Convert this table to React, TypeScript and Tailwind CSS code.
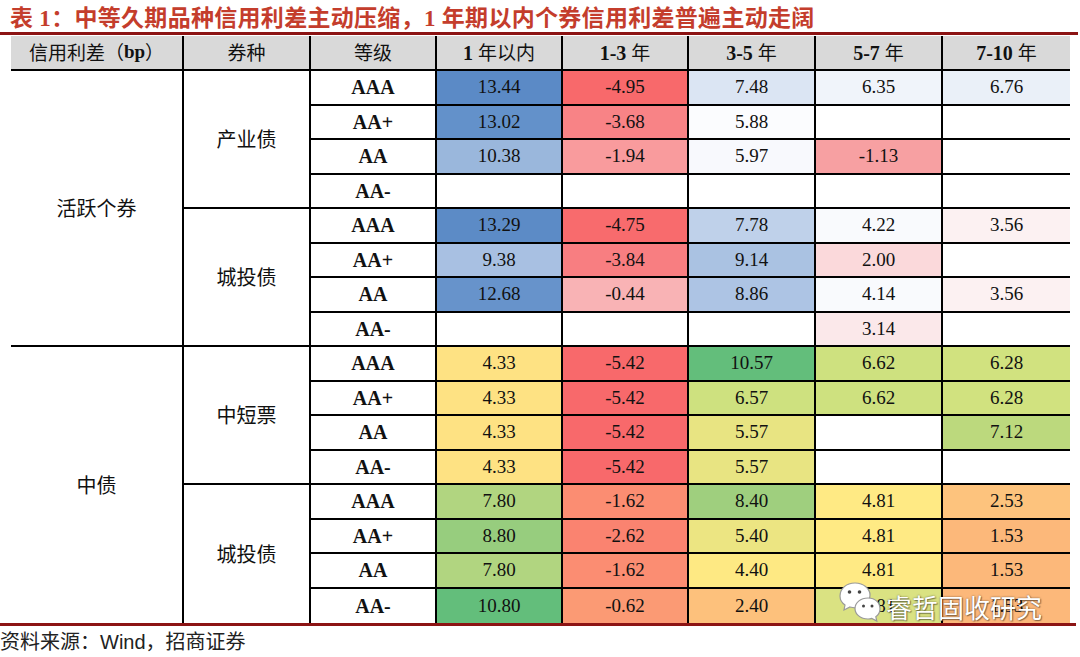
import React from "react";

// bg colours read off the Excel colour scales in the screenshot
type Cell = [string, string];

const W = "#ffffff";

const sections: {
  name: string;
  groups: { name: string; rows: { rating: string; cells: Cell[] }[] }[];
}[] = [
  {
    name: "活跃个券",
    groups: [
      {
        name: "产业债",
        rows: [
          { rating: "AAA", cells: [["13.44", "bg-[#5b8ac6]"], ["-4.95", "bg-[#f8696b]"], ["7.48", "bg-[#dbe5f3]"], ["6.35", "bg-[#f0f4fa]"], ["6.76", "bg-[#eaf0f8]"]] },
          { rating: "AA+", cells: [["13.02", "bg-[#6391ca]"], ["-3.68", "bg-[#f88386]"], ["5.88", "bg-[#fbfcfe]"], ["", W], ["", W]] },
          { rating: "AA", cells: [["10.38", "bg-[#9ab7dc]"], ["-1.94", "bg-[#f99b9d]"], ["5.97", "bg-[#f8f9fd]"], ["-1.13", "bg-[#f7a0a2]"], ["", W]] },
          { rating: "AA-", cells: [["", W], ["", W], ["", W], ["", W], ["", W]] },
        ],
      },
      {
        name: "城投债",
        rows: [
          { rating: "AAA", cells: [["13.29", "bg-[#5c8bc6]"], ["-4.75", "bg-[#f86b6d]"], ["7.78", "bg-[#bfd1ea]"], ["4.22", "bg-[#f9fafd]"], ["3.56", "bg-[#fcf1f2]"]] },
          { rating: "AA+", cells: [["9.38", "bg-[#a8c0e2]"], ["-3.84", "bg-[#f87e81]"], ["9.14", "bg-[#aac2e2]"], ["2.00", "bg-[#fbd9db]"], ["", W]] },
          { rating: "AA", cells: [["12.68", "bg-[#6793cb]"], ["-0.44", "bg-[#f9b3b5]"], ["8.86", "bg-[#adc4e4]"], ["4.14", "bg-[#f9fafd]"], ["3.56", "bg-[#fcf1f2]"]] },
          { rating: "AA-", cells: [["", W], ["", W], ["", W], ["3.14", "bg-[#fbe8ea]"], ["", W]] },
        ],
      },
    ],
  },
  {
    name: "中债",
    groups: [
      {
        name: "中短票",
        rows: [
          { rating: "AAA", cells: [["4.33", "bg-[#fee283]"], ["-5.42", "bg-[#f8696b]"], ["10.57", "bg-[#63be7b]"], ["6.62", "bg-[#cee17f]"], ["6.28", "bg-[#d1e27f]"]] },
          { rating: "AA+", cells: [["4.33", "bg-[#fee283]"], ["-5.42", "bg-[#f8696b]"], ["6.57", "bg-[#cee17f]"], ["6.62", "bg-[#cee17f]"], ["6.28", "bg-[#d1e27f]"]] },
          { rating: "AA", cells: [["4.33", "bg-[#fee283]"], ["-5.42", "bg-[#f8696b]"], ["5.57", "bg-[#e8e482]"], ["", W], ["7.12", "bg-[#bcd97d]"]] },
          { rating: "AA-", cells: [["4.33", "bg-[#fee283]"], ["-5.42", "bg-[#f8696b]"], ["5.57", "bg-[#e8e482]"], ["", W], ["", W]] },
        ],
      },
      {
        name: "城投债",
        rows: [
          { rating: "AAA", cells: [["7.80", "bg-[#b1d580]"], ["-1.62", "bg-[#fb8d72]"], ["8.40", "bg-[#9fcf7e]"], ["4.81", "bg-[#ffea84]"], ["2.53", "bg-[#fdc37d]"]] },
          { rating: "AA+", cells: [["8.80", "bg-[#97cd7e]"], ["-2.62", "bg-[#fa8370]"], ["5.40", "bg-[#ece582]"], ["4.81", "bg-[#ffea84]"], ["1.53", "bg-[#fcb87a]"]] },
          { rating: "AA", cells: [["7.80", "bg-[#b1d580]"], ["-1.62", "bg-[#fb8d72]"], ["4.40", "bg-[#fee983]"], ["4.81", "bg-[#ffea84]"], ["1.53", "bg-[#fcb87a]"]] },
          { rating: "AA-", cells: [["10.80", "bg-[#63be7b]"], ["-0.62", "bg-[#fb9a74]"], ["2.40", "bg-[#fdc17c]"], ["5.81", "bg-[#dae282]"], ["1.53", "bg-[#fcb87a]"]] },
        ],
      },
    ],
  },
];

const serif = "font-['Liberation_Serif','Noto_Sans_CJK_SC',serif]";
const cjk = "font-['Noto_Sans_CJK_SC',sans-serif]";

function WeChatMark() {
  return (
    <svg width="46" height="46" viewBox="0 0 46 46">
      <g stroke="#9a9a9a" strokeWidth="1.2" fill="#ffffff">
        <path d="M17 3C8 3 2 9 2 16c0 4 2 7 5 9l-1 5 6-3c2 .6 3.5.8 5 .8 9 0 15-6 15-12.8C32 9 26 3 17 3z" />
        <path d="M30 18c-7.5 0-13 4.8-13 10.5S22.5 39 30 39c1.4 0 2.6-.2 3.8-.6l5 2.6-1-4.3c2.6-1.9 4.2-4.7 4.2-7.7C42 22.8 37.5 18 30 18z" />
      </g>
      <circle cx="11.5" cy="12" r="1.8" fill="#444" />
      <circle cx="21.5" cy="12" r="1.8" fill="#444" />
      <circle cx="25.5" cy="26" r="1.5" fill="#444" />
      <circle cx="34" cy="26" r="1.5" fill="#444" />
    </svg>
  );
}

export default function App() {
  const headCell = "flex items-center justify-center bg-[#d9d9d9] border-b-2 border-black text-[19px] text-[#111]";
  return (
    <div className="relative w-[1080px] h-[657px] overflow-hidden bg-white">
      <div className={`h-[32px] pl-[10px] pt-[6px] text-[23px] leading-[26px] tracking-[0.3px] font-bold text-[#c43d2c] ${serif}`}>
        表 1：中等久期品种信用利差主动压缩，1 年期以内个券信用利差普遍主动走阔
      </div>
      <div className="h-[3px] w-[1078px] bg-[#8c1414]" />
      <div className="h-[1px]" />

      <div className="ml-[11px] grid grid-cols-[173px_127px_126px_126px_126px_127px_127px_127px] grid-rows-[35px_repeat(16,34.5px)] text-[#111]">
        <div className={`${headCell} border-r-2 ${cjk}`}>
          信用利差（<b className={serif}>bp</b>）
        </div>
        <div className={`${headCell} border-r-2 ${cjk}`}>券种</div>
        <div className={`${headCell} border-r-2 ${cjk}`}>等级</div>
        {["1 年以内", "1-3 年", "3-5 年", "5-7 年", "7-10 年"].map((h, i) => {
          const [num, rest] = h.split(" ");
          return (
            <div key={h} className={`${headCell} ${i < 4 ? "border-r-2" : ""} ${serif}`}>
              <b className="text-[20px]">{num}</b>
              <span className={`ml-[5px] ${cjk}`}>{rest}</span>
            </div>
          );
        })}

        {sections.map((sec, si) => {
          const lastSec = si === sections.length - 1;
          return (
            <React.Fragment key={sec.name}>
              <div
                className={`row-span-8 flex items-center justify-center border-r-2 border-black text-[20px] ${cjk} ${lastSec ? "" : "border-b-2"}`}
              >
                {sec.name}
              </div>
              {sec.groups.map((g, gi) => {
                const lastGroup = lastSec && gi === sec.groups.length - 1;
                return (
                  <React.Fragment key={g.name + gi}>
                    <div
                      className={`row-span-4 flex items-center justify-center border-r-2 border-black text-[20px] ${cjk} ${lastGroup ? "" : "border-b-2"}`}
                    >
                      {g.name}
                    </div>
                    {g.rows.map((r, ri) => {
                      const lastRow = lastGroup && ri === g.rows.length - 1;
                      const bb = lastRow ? "" : "border-b-2";
                      return (
                        <React.Fragment key={r.rating + ri}>
                          <div className={`flex items-center justify-center border-r-2 border-black font-bold text-[20px] ${serif} ${bb}`}>
                            {r.rating}
                          </div>
                          {r.cells.map(([v, bg], ci) => (
                            <div
                              key={ci}
                              className={`flex items-center justify-center border-black text-[19px] ${serif} ${bg} ${bb} ${ci < 4 ? "border-r-2" : ""}`}
                            >
                              {v}
                            </div>
                          ))}
                        </React.Fragment>
                      );
                    })}
                  </React.Fragment>
                );
              })}
            </React.Fragment>
          );
        })}
      </div>

      <div className="h-[3px] w-[1076px] bg-[#8c1414]" />
      <div className="pt-[3px] text-[20px] leading-[26px] text-[#222] font-['Liberation_Sans','Noto_Sans_CJK_SC',sans-serif]">
        资料来源：Wind，招商证券
      </div>

      {/* watermark */}
      <div className="absolute left-[838px] top-[580px] flex items-center">
        <WeChatMark />
        <span className={`ml-[2px] mt-[8px] text-[26px] leading-[30px] text-white ${cjk} [text-shadow:0_0_2px_rgba(0,0,0,0.55),1px_1px_1px_rgba(0,0,0,0.35)]`}>
          睿哲固收研究
        </span>
      </div>
    </div>
  );
}
